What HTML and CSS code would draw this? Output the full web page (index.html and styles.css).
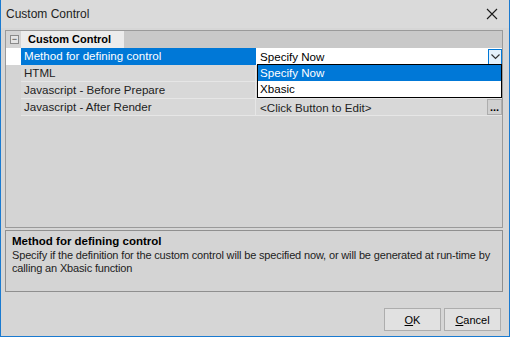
FILE: index.html
```html
<!DOCTYPE html>
<html lang="en-US">

<head>
    <meta charset="UTF-8">
    <title>Custom Control</title>
    <link rel="stylesheet" href="styles.css">
</head>

<body>
    <div class="window">
        <div class="titlebar">
            <span class="title">Custom Control</span>
            <svg class="close" width="12" height="12" viewBox="0 0 12 12">
                <path d="M1 1 L11 11 M11 1 L1 11" stroke="#1a1a1a" stroke-width="1.1" fill="none" />
            </svg>
        </div>
        <div class="content">
            <div class="grid">
                <div class="row category">
                    <div class="margin"><span class="toggle">&minus;</span></div>
                    <div class="cat-label">Custom Control</div>
                    <div class="cat-rest"></div>
                </div>
                <div class="row selected">
                    <div class="margin"></div>
                    <div class="label"><span>Method for defining control</span></div>
                    <div class="value">
                        <span>Specify Now</span>
                        <span class="drop-btn">
                            <svg width="9" height="6" viewBox="0 0 9 6">
                                <path d="M0.5 0.5 L4.5 4.5 L8.5 0.5" stroke="#333" stroke-width="1.2" fill="none" />
                            </svg>
                        </span>
                    </div>
                </div>
                <div class="row">
                    <div class="margin"></div>
                    <div class="label">HTML</div>
                    <div class="value"></div>
                </div>
                <div class="row">
                    <div class="margin"></div>
                    <div class="label">Javascript - Before Prepare</div>
                    <div class="value"></div>
                </div>
                <div class="row">
                    <div class="margin"></div>
                    <div class="label">Javascript - After Render</div>
                    <div class="value">
                        <span>&lt;Click Button to Edit&gt;</span>
                        <span class="dots-btn">...</span>
                    </div>
                </div>

                <!-- open dropdown list -->
                <ul class="dropdown">
                    <li class="active">Specify Now</li>
                    <li>Xbasic</li>
                </ul>
            </div>

            <div class="description">
                <div class="desc-title">Method for defining control</div>
                <div class="desc-text">Specify if the definition for the custom control will be specified now, or will be generated at run-time by calling an Xbasic function</div>
            </div>
        </div>
        <div class="footer">
            <button class="btn"><u>O</u>K</button>
            <button class="btn"><u>C</u>ancel</button>
        </div>
    </div>
</body>

</html>
```

FILE: styles.css
```css
body {
    margin: 0;
    padding: 0;
    font-family: "Liberation Sans", Arial, sans-serif;
    font-size: 11px;
    color: #000;
}

.window {
    width: 510px;
    height: 337px;
    box-sizing: border-box;
    border: 1px solid #1a7ad0;
    border-top: none;
    background-color: #d6d6d6;
    display: flex;
    flex-direction: column;
}

.titlebar {
    height: 28px;
    display: flex;
    align-items: center;
    justify-content: space-between;
    padding: 0 11px 0 5px;
    background-color: #dadada;
}

.title {
    font-size: 12px;
    color: #222;
}

.content {
    padding: 2px 6px 0 4px;
    display: flex;
    flex-direction: column;
    gap: 2px;
}

.grid {
    position: relative;
    height: 198px;
    border: 1px solid #9a9a9a;
    background-color: #d4d4d4;
    box-sizing: border-box;
}

.row {
    display: flex;
    height: 17px;
}

.margin {
    width: 15px;
    flex-shrink: 0;
    display: flex;
    align-items: center;
    justify-content: center;
}

.toggle {
    width: 7px;
    height: 7px;
    border: 1px solid #8a8a8a;
    background-color: #e4e4e4;
    font-size: 9px;
    line-height: 6px;
    text-align: center;
    color: #333;
    margin-left: 2px;
}

.cat-label {
    width: 96px;
    padding-left: 7px;
    font-weight: bold;
    font-size: 11px;
    line-height: 17px;
    background-color: #ececec;
}

.cat-rest {
    flex: 1;
    background-color: #c9c9c9;
}

.label {
    width: 235px;
    flex-shrink: 0;
    padding-left: 3px;
    box-sizing: border-box;
    font-size: 11.6px;
    line-height: 16px;
    color: #222;
    border-bottom: 1px solid #e6e6e6;
    border-right: 1px solid #e6e6e6;
    background-color: #d8d8d8;
}

.value {
    flex: 1;
    display: flex;
    justify-content: space-between;
    align-items: center;
    padding-left: 4px;
    font-size: 11.6px;
    color: #222;
    border-bottom: 1px solid #e6e6e6;
    background-color: #d8d8d8;
}

.selected .margin {
    background-color: #fff;
}

.selected .label {
    background-color: #0078d7;
    color: #fff;
    border: none;
    padding-left: 0;
}

.selected .label span {
    padding-left: 3px;
}

.selected .value {
    background-color: #fff;
    color: #000;
    border-bottom: none;
}

.drop-btn {
    width: 12px;
    height: 14px;
    border: 1px solid #0078d7;
    background-color: #e5f1fb;
    display: flex;
    align-items: center;
    justify-content: center;
}

.dots-btn {
    width: 13px;
    height: 14px;
    margin-bottom: 1px;
    border: 1px solid #adadad;
    background-color: #d0d0d0;
    font-weight: bold;
    font-size: 11px;
    line-height: 14px;
    text-align: center;
    color: #000;
}

.dropdown {
    position: absolute;
    left: 251px;
    top: 33px;
    width: 243px;
    margin: 0;
    padding: 0;
    list-style: none;
    border: 1px solid #000;
    background-color: #fff;
    font-size: 11.6px;
}

.dropdown li {
    height: 16px;
    line-height: 16px;
    padding-left: 2px;
}

.dropdown li.active {
    background-color: #0078d7;
    color: #fff;
}

.description {
    height: 62px;
    box-sizing: border-box;
    border: 1px solid #8f8f8f;
    padding: 4px 6px;
    background-color: #d4d4d4;
}

.desc-title {
    font-weight: bold;
    font-size: 11.5px;
    margin-bottom: 2px;
}

.desc-text {
    color: #222;
    line-height: 13px;
    letter-spacing: -0.15px;
}

.footer {
    display: flex;
    justify-content: flex-end;
    gap: 3px;
    padding: 16px 8px 0 0;
}

.btn {
    width: 57px;
    height: 23px;
    border: 1px solid #adadad;
    background-color: #e1e1e1;
    font-family: "Liberation Sans", Arial, sans-serif;
    font-size: 11px;
    font-weight: normal;
    color: #000;
    padding: 0;
}
```
